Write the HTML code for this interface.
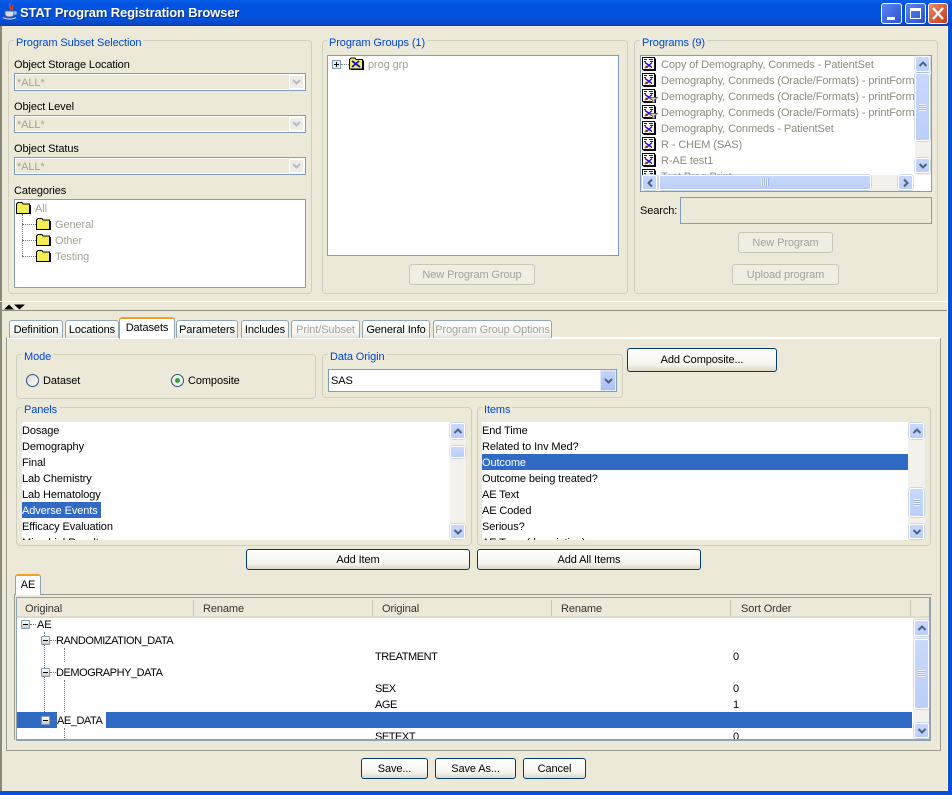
<!DOCTYPE html>
<html><head><meta charset="utf-8"><style>
*{box-sizing:border-box}
html,body{margin:0;padding:0}
body{width:952px;height:795px;position:relative;overflow:hidden;background:#ece9d8;font:11px/16px "Liberation Sans",sans-serif;letter-spacing:-.1px;color:#000}
.a,.t,.g,.gt,.f,.b,.sb,.tab,.l{position:absolute}
.t{white-space:nowrap;height:16px;padding-top:1px}
.c{letter-spacing:-.45px}
.d{color:#a5a298}
.g{border:1px solid #d0d0bf;border-radius:4px}
.gt{background:#ece9d8;color:#0046d5;padding:1px 2px 0;white-space:nowrap;height:16px}
.f{border:1px solid #7f9db9;background:#fff;overflow:hidden}
.cb{background:#ece9d8;border-color:#7f9db9;box-shadow:inset 0 0 0 1px #fff}
.b{border:1px solid #003c74;border-radius:3px;background:linear-gradient(#fff,#f5f4ee 70%,#dcd8c8);text-align:center;line-height:20px}
.b.x{border-color:#c9c7ba;background:#f0eee3;color:#a5a298}
.sb{background:linear-gradient(#c9d8fb,#bccff8);border:1px solid #fff;border-radius:2px;box-shadow:0 0 0 .5px #a9bde6}
.sb svg{position:absolute;left:50%;top:50%;transform:translate(-50%,-50%)}
.tab{border:1px solid #91a7b4;border-bottom:0;border-radius:3px 3px 0 0;background:linear-gradient(#fff,#f3f3ef 75%,#dfe0dc);text-align:center;line-height:19px;white-space:nowrap}
.tab.on{background:#fff;border-color:#91a7b4;border-top:2px solid #f2a127;z-index:3}
.tab.x{color:#a5a298}
.l{background:#9b9b90}
.dot{position:absolute;border-left:1px dotted #777}
.doth{position:absolute;border-top:1px dotted #777}
.box{position:absolute;width:9px;height:9px;border:1px solid #7f9db9;background:linear-gradient(#fff,#ccc9ba);border-radius:1px}
.box:after{content:"";position:absolute;left:1px;top:3px;width:5px;height:1px;background:#000}
</style></head><body>
<svg width="0" height="0" style="position:absolute">
<defs>
<symbol id="up" viewBox="0 0 9 6"><path d="M1 5L4.500 1.500L8 5" fill="none" stroke="#4d6185" stroke-width="2"/></symbol>
<symbol id="dn" viewBox="0 0 9 6"><path d="M1 1L4.500 4.500L8 1" fill="none" stroke="#4d6185" stroke-width="2"/></symbol>
<symbol id="lf" viewBox="0 0 6 9"><path d="M5 1L1.500 4.500L5 8" fill="none" stroke="#4d6185" stroke-width="2"/></symbol>
<symbol id="rt" viewBox="0 0 6 9"><path d="M1 1L4.500 4.500L1 8" fill="none" stroke="#4d6185" stroke-width="2"/></symbol>
<symbol id="prog" viewBox="0 0 14 14"><path d="M.5.500H12.500V12.500H.5z" fill="#fff" stroke="#000"/><path d="M13.500 1.500V13.500H1.500" fill="none" stroke="#000"/><path d="M2 2.500h3M7 2.500h4M2 4.500h2M8 4.500h3" stroke="#222"/><path d="M3 5.500l7 5M10 5.500l-6 5.500" stroke="#1414c8" stroke-width="1.400"/><path d="M3 11l2-2" stroke="#d81818" stroke-width="1.600"/><path d="M6.500 11.500h2" stroke="#e8c000" stroke-width="1.500"/></symbol>
<symbol id="filt" viewBox="0 0 9 6"><path d="M.5.500h8L5.500 3v2.500h-2V3z" fill="#ccc" stroke="#555" stroke-width=".7"/></symbol>
<symbol id="fold" viewBox="0 0 15 12"><path d="M.5 11.500V2L2 .5h4L7 2h6.500v9.500z" fill="#f4ee55" stroke="#000"/><path d="M14.500 3v9H2" fill="none" stroke="#000"/></symbol>
</defs></svg>

<!-- frame -->
<div class="a" style="left:0;top:0;width:952px;height:26px;background:linear-gradient(#0a5fe8,#0252e2 15%,#0453dd 70%,#0a48c8 90%,#0c3fae)"></div>
<div class="a" style="left:0;top:26px;width:2px;height:765px;background:#8a8878"></div>
<div class="a" style="left:948px;top:26px;width:4px;height:769px;background:#0a4fd8"></div>
<div class="a" style="left:947px;top:26px;width:1px;height:765px;background:#fff"></div>
<div class="a" style="left:0;top:791px;width:952px;height:4px;background:#0a4fd8"></div>
<svg class="a" style="left:2px;top:2px" width="16" height="18" viewBox="0 0 16 18"><path d="M8 1c-2 3 2 4 0 7M11 3c-1 2 0 3-1 5" fill="none" stroke="#d84020" stroke-width="1.500"/><path d="M3 9h9v3c0 2-2 3-4.500 3S3 14 3 12z" fill="#d8dcec" stroke="#506088"/><path d="M1 15.500c3 2 10 2 13 0M12 10h2v2h-2" fill="none" stroke="#dfe4f4" stroke-width="1"/></svg>
<div class="t" style="left:20px;top:4px;color:#fff;font:bold 13px/16px 'Liberation Sans',sans-serif;letter-spacing:-.15px;text-shadow:1px 1px 0 #0a2f8c">STAT Program Registration Browser</div>
<div class="a" style="left:881px;top:3px;width:21px;height:21px;border:1px solid #fff;border-radius:3px;background:linear-gradient(135deg,#5c86ee,#2a50d8)"><div class="a" style="left:5px;top:13px;width:8px;height:3px;background:#fff"></div></div>
<div class="a" style="left:905px;top:3px;width:21px;height:21px;border:1px solid #fff;border-radius:3px;background:linear-gradient(135deg,#5c86ee,#2a50d8)"><div class="a" style="left:4px;top:4px;width:11px;height:11px;border:1px solid #fff;border-top-width:3px"></div></div>
<div class="a" style="left:928px;top:3px;width:20px;height:21px;border:1px solid #fff;border-radius:3px;background:linear-gradient(135deg,#e8886a,#c83c14)"><svg class="a" style="left:3px;top:3px" width="12" height="13"><path d="M1 1L11 12M11 1L1 12" stroke="#fff" stroke-width="2.200"/></svg></div>

<!-- Program subset -->
<div class="g" style="left:8px;top:40px;width:304px;height:254px"></div>
<div class="gt" style="left:14px;top:34px">Program Subset Selection</div>
<div class="t" style="left:14px;top:56px">Object Storage Location</div>
<div class="f cb" style="left:14px;top:73px;width:292px;height:18px"></div><div class="t d" style="left:17px;top:74px">*ALL*</div>
<div class="a" style="left:289px;top:75px;width:15px;height:14px;background:#eeede5;border:1px solid #fff"><svg class="a" style="left:2px;top:3px" width="9" height="6"><use href="#dn" opacity=".35"/></svg></div>
<div class="t" style="left:14px;top:98px">Object Level</div>
<div class="f cb" style="left:14px;top:115px;width:292px;height:18px"></div><div class="t d" style="left:17px;top:116px">*ALL*</div>
<div class="a" style="left:289px;top:117px;width:15px;height:14px;background:#eeede5;border:1px solid #fff"><svg class="a" style="left:2px;top:3px" width="9" height="6"><use href="#dn" opacity=".35"/></svg></div>
<div class="t" style="left:14px;top:140px">Object Status</div>
<div class="f cb" style="left:14px;top:157px;width:292px;height:18px"></div><div class="t d" style="left:17px;top:158px">*ALL*</div>
<div class="a" style="left:289px;top:159px;width:15px;height:14px;background:#eeede5;border:1px solid #fff"><svg class="a" style="left:2px;top:3px" width="9" height="6"><use href="#dn" opacity=".35"/></svg></div>
<div class="t" style="left:14px;top:182px">Categories</div>
<div class="f" style="left:14px;top:199px;width:292px;height:89px"></div>
<svg class="a" style="left:16px;top:202px" width="15" height="12"><use href="#fold"/></svg>
<div class="t d" style="left:35px;top:200px">All</div>
<div class="dot" style="left:22px;top:214px;height:42px"></div>
<div class="doth" style="left:22px;top:224px;width:14px"></div><div class="doth" style="left:22px;top:240px;width:14px"></div><div class="doth" style="left:22px;top:256px;width:14px"></div>
<svg class="a" style="left:36px;top:218px" width="15" height="12"><use href="#fold"/></svg><div class="t d" style="left:55px;top:216px">General</div>
<svg class="a" style="left:36px;top:234px" width="15" height="12"><use href="#fold"/></svg><div class="t d" style="left:55px;top:232px">Other</div>
<svg class="a" style="left:36px;top:250px" width="15" height="12"><use href="#fold"/></svg><div class="t d" style="left:55px;top:248px">Testing</div>

<!-- Program groups -->
<div class="g" style="left:322px;top:40px;width:306px;height:254px"></div>
<div class="gt" style="left:327px;top:34px">Program Groups (1)</div>
<div class="f" style="left:327px;top:55px;width:292px;height:201px"></div>
<div class="a" style="left:332px;top:60px;width:9px;height:9px;border:1px solid #7f9db9;background:#eee"><div class="a" style="left:1px;top:3px;width:5px;height:1px;background:#000"></div><div class="a" style="left:3px;top:1px;width:1px;height:5px;background:#000"></div></div>
<div class="doth" style="left:341px;top:64px;width:8px"></div>
<svg class="a" style="left:349px;top:57px" width="15" height="13"><use href="#fold"/><path d="M3 4l8 6M10 4l-7 6" stroke="#1414c8" stroke-width="1.800"/></svg>
<div class="t d" style="left:368px;top:56px">prog grp</div>
<div class="b x" style="left:409px;top:264px;width:126px;height:21px">New Program Group</div>

<!-- Programs -->
<div class="g" style="left:634px;top:40px;width:304px;height:254px"></div>
<div class="gt" style="left:640px;top:34px">Programs (9)</div>
<div class="f" style="left:640px;top:55px;width:292px;height:137px"></div>
<div class="a" style="left:641px;top:56px;width:274px;height:119px;overflow:hidden">
<svg class="a" style="left:1px;top:1px" width="14" height="14"><use href="#prog"/></svg><div class="t" style="left:20px;top:0;color:#8c8a80">Copy of Demography, Conmeds - PatientSet</div>
<svg class="a" style="left:1px;top:17px" width="14" height="14"><use href="#prog"/></svg><div class="t" style="left:20px;top:16px;color:#8c8a80">Demography, Conmeds (Oracle/Formats) - printFormats</div>
<svg class="a" style="left:1px;top:33px" width="14" height="14"><use href="#prog"/></svg><svg class="a" style="left:8px;top:41px" width="9" height="6"><use href="#filt"/></svg><div class="t" style="left:20px;top:32px;color:#8c8a80">Demography, Conmeds (Oracle/Formats) - printFormats</div>
<svg class="a" style="left:1px;top:49px" width="14" height="14"><use href="#prog"/></svg><svg class="a" style="left:8px;top:57px" width="9" height="6"><use href="#filt"/></svg><div class="t" style="left:20px;top:48px;color:#8c8a80">Demography, Conmeds (Oracle/Formats) - printFormats</div>
<svg class="a" style="left:1px;top:65px" width="14" height="14"><use href="#prog"/></svg><div class="t" style="left:20px;top:64px;color:#8c8a80">Demography, Conmeds - PatientSet</div>
<svg class="a" style="left:1px;top:81px" width="14" height="14"><use href="#prog"/></svg><div class="t" style="left:20px;top:80px;color:#8c8a80">R - CHEM (SAS)</div>
<svg class="a" style="left:1px;top:97px" width="14" height="14"><use href="#prog"/></svg><div class="t" style="left:20px;top:96px;color:#8c8a80">R-AE test1</div>
<svg class="a" style="left:1px;top:113px" width="14" height="14"><use href="#prog"/></svg><div class="t" style="left:20px;top:112px;color:#8c8a80">Test Prog Print</div>
</div>
<div class="a" style="left:915px;top:56px;width:16px;height:119px;background:#f3f1ec"></div>
<div class="sb" style="left:915px;top:56px;width:15px;height:16px"><svg width="9" height="6"><use href="#up"/></svg></div>
<div class="sb" style="left:915px;top:73px;width:15px;height:68px"></div><div class="a" style="left:919px;top:104px;width:7px;height:7px;background:repeating-linear-gradient(#eef3ff 0 1px,#9fb7ec 1px 2px)"></div>
<div class="sb" style="left:915px;top:158px;width:15px;height:15px"><svg width="9" height="6"><use href="#dn"/></svg></div>
<div class="a" style="left:641px;top:175px;width:272px;height:16px;background:#f3f1ec"></div>
<div class="sb" style="left:642px;top:175px;width:15px;height:15px"><svg width="6" height="9"><use href="#lf"/></svg></div>
<div class="sb" style="left:659px;top:175px;width:212px;height:15px"></div><div class="a" style="left:761px;top:178px;width:8px;height:8px;background:repeating-linear-gradient(90deg,#eef3ff 0 1px,#9fb7ec 1px 2px)"></div>
<div class="sb" style="left:898px;top:175px;width:15px;height:15px"><svg width="6" height="9"><use href="#rt"/></svg></div>
<div class="t" style="left:640px;top:202px">Search:</div>
<div class="f" style="left:680px;top:197px;width:252px;height:27px;background:#ece9d8"></div>
<div class="b x" style="left:738px;top:232px;width:95px;height:21px">New Program</div>
<div class="b x" style="left:732px;top:264px;width:107px;height:21px">Upload program</div>

<!-- splitter -->
<div class="a" style="left:0;top:301px;width:947px;height:1px;background:#fff"></div>
<svg class="a" style="left:3px;top:303px" width="24" height="7"><path d="M1 6.500L6 1.500L11 6.500zM11 1.500H22L16.500 6.500z" fill="#000"/></svg>
<div class="a" style="left:2px;top:310px;width:945px;height:1px;background:#8e8d7c"></div>

<!-- tabs -->
<div class="a" style="left:6px;top:337px;width:935px;height:414px;border:1px solid #9b9b90;border-top:2px solid #fff;border-left-color:#fff"></div>
<div class="a" style="left:6px;top:337px;width:1px;height:414px;background:#9b9b90"></div>
<div class="tab" style="left:9px;top:320px;width:54px;height:18px">Definition</div>
<div class="tab" style="left:65px;top:320px;width:54px;height:18px">Locations</div>
<div class="tab on" style="left:119px;top:317px;width:56px;height:22px">Datasets</div>
<div class="tab" style="left:176px;top:320px;width:62px;height:18px">Parameters</div>
<div class="tab" style="left:241px;top:320px;width:48px;height:18px">Includes</div>
<div class="tab x" style="left:291px;top:320px;width:69px;height:18px">Print/Subset</div>
<div class="tab" style="left:362px;top:320px;width:68px;height:18px">General Info</div>
<div class="tab x" style="left:433px;top:320px;width:119px;height:18px">Program Group Options</div>

<!-- Mode -->
<div class="g" style="left:16px;top:354px;width:300px;height:45px"></div>
<div class="gt" style="left:22px;top:348px">Mode</div>
<div class="a" style="left:26px;top:374px;width:13px;height:13px;border:1px solid #2a5480;border-radius:50%;background:linear-gradient(135deg,#dcd9cc,#fff)"></div>
<div class="t" style="left:43px;top:372px">Dataset</div>
<div class="a" style="left:171px;top:374px;width:13px;height:13px;border:1px solid #2a5480;border-radius:50%;background:#f3f2ea"><div class="a" style="left:3px;top:3px;width:5px;height:5px;border-radius:50%;background:#36a536"></div></div>
<div class="t" style="left:188px;top:372px">Composite</div>

<!-- Data origin -->
<div class="g" style="left:322px;top:354px;width:301px;height:44px"></div>
<div class="gt" style="left:328px;top:348px">Data Origin</div>
<div class="f" style="left:328px;top:369px;width:289px;height:23px"></div>
<div class="t" style="left:331px;top:372px">SAS</div>
<div class="a" style="left:600px;top:370px;width:16px;height:21px;background:linear-gradient(#c6d6fb,#a9c0f2);border:1px solid #e4ecfb"><svg class="a" style="left:3px;top:7px" width="9" height="6"><use href="#dn"/></svg></div>
<div class="b" style="left:627px;top:348px;width:150px;height:24px;line-height:23px">Add Composite...</div>

<!-- Panels -->
<div class="g" style="left:16px;top:407px;width:456px;height:139px"></div>
<div class="gt" style="left:22px;top:401px">Panels</div>
<div class="a" style="left:22px;top:422px;width:428px;height:118px;background:#fff;overflow:hidden">
<div class="t" style="top:0">Dosage</div><div class="t" style="top:16px">Demography</div><div class="t" style="top:32px">Final</div><div class="t" style="top:48px">Lab Chemistry</div><div class="t" style="top:64px">Lab Hematology</div>
<div class="t" style="top:80px;width:79px;background:#316ac5;color:#fff">Adverse Events</div>
<div class="t" style="top:96px">Efficacy Evaluation</div><div class="t" style="top:112px">Microbiol Results</div>
</div>
<div class="a" style="left:450px;top:422px;width:16px;height:118px;background:#f3f1ec"></div>
<div class="sb" style="left:450px;top:423px;width:15px;height:16px"><svg width="9" height="6"><use href="#up"/></svg></div>
<div class="sb" style="left:450px;top:446px;width:15px;height:12px"></div>
<div class="sb" style="left:450px;top:524px;width:15px;height:15px"><svg width="9" height="6"><use href="#dn"/></svg></div>

<!-- Items -->
<div class="g" style="left:477px;top:407px;width:454px;height:139px"></div>
<div class="gt" style="left:482px;top:401px">Items</div>
<div class="a" style="left:482px;top:422px;width:426px;height:118px;background:#fff;overflow:hidden">
<div class="t" style="top:0">End Time</div><div class="t" style="top:16px">Related to Inv Med?</div>
<div class="t" style="top:32px;width:426px;background:#316ac5;color:#fff">Outcome</div>
<div class="t" style="top:48px">Outcome being treated?</div><div class="t" style="top:64px">AE Text</div><div class="t" style="top:80px">AE Coded</div><div class="t" style="top:96px">Serious?</div><div class="t" style="top:112px">AE Term (description)</div>
</div>
<div class="a" style="left:908px;top:422px;width:17px;height:118px;background:#f3f1ec"></div>
<div class="sb" style="left:909px;top:423px;width:15px;height:16px"><svg width="9" height="6"><use href="#up"/></svg></div>
<div class="sb" style="left:909px;top:488px;width:15px;height:29px"></div><div class="a" style="left:913px;top:499px;width:7px;height:7px;background:repeating-linear-gradient(#eef3ff 0 1px,#9fb7ec 1px 2px)"></div>
<div class="sb" style="left:909px;top:524px;width:15px;height:15px"><svg width="9" height="6"><use href="#dn"/></svg></div>

<div class="b" style="left:246px;top:549px;width:224px;height:21px">Add Item</div>
<div class="b" style="left:477px;top:549px;width:224px;height:21px">Add All Items</div>

<!-- AE subpanel -->
<div class="a" style="left:40px;top:594px;width:892px;height:1px;background:#9b9b90"></div>
<div class="a" style="left:14px;top:594px;width:1px;height:146px;background:#9b9b90"></div>
<div class="tab on" style="left:15px;top:574px;width:26px;height:21px">AE</div>
<div class="a" style="left:16px;top:597px;width:915px;height:144px;background:#fff;border:1px solid #8fa4b2;border-bottom:2px solid #8fa4b2;border-right:2px solid #8fa4b2"></div>
<div class="a" style="left:17px;top:598px;width:912px;height:20px;background:#ece9d8;border-bottom:2px solid #dedbc9"></div>
<div class="a" style="left:193px;top:600px;width:1px;height:16px;background:#cbc8b8"></div>
<div class="a" style="left:372px;top:600px;width:1px;height:16px;background:#cbc8b8"></div>
<div class="a" style="left:551px;top:600px;width:1px;height:16px;background:#cbc8b8"></div>
<div class="a" style="left:730px;top:600px;width:1px;height:16px;background:#cbc8b8"></div>
<div class="a" style="left:910px;top:600px;width:1px;height:16px;background:#cbc8b8"></div>
<div class="t" style="left:25px;top:600px;color:#333">Original</div>
<div class="t" style="left:203px;top:600px;color:#333">Rename</div>
<div class="t" style="left:382px;top:600px;color:#333">Original</div>
<div class="t" style="left:561px;top:600px;color:#333">Rename</div>
<div class="t" style="left:741px;top:600px;color:#333">Sort Order</div>

<div class="a" style="left:17px;top:712px;width:895px;height:16px;background:#316ac5"></div>
<div class="a" style="left:57px;top:712px;width:49px;height:16px;background:#fff"></div>
<div class="dot" style="left:44px;top:632px;height:80px"></div>
<div class="dot" style="left:64px;top:648px;height:14px"></div>
<div class="dot" style="left:64px;top:680px;height:32px"></div>
<div class="dot" style="left:64px;top:728px;height:12px"></div>
<div class="box" style="left:21px;top:620px"></div><div class="doth" style="left:30px;top:624px;width:6px"></div>
<div class="box" style="left:41px;top:636px"></div><div class="doth" style="left:50px;top:640px;width:6px"></div>
<div class="box" style="left:41px;top:668px"></div><div class="doth" style="left:50px;top:672px;width:6px"></div>
<div class="box" style="left:41px;top:716px"></div><div class="doth" style="left:50px;top:720px;width:6px"></div>
<div class="t" style="left:37px;top:616px">AE</div>
<div class="t c" style="left:56px;top:632px">RANDOMIZATION_DATA</div>
<div class="t c" style="left:56px;top:664px">DEMOGRAPHY_DATA</div>
<div class="t c" style="left:57px;top:712px">AE_DATA</div>
<div class="t c" style="left:375px;top:648px">TREATMENT</div><div class="t" style="left:733px;top:648px">0</div>
<div class="t c" style="left:375px;top:680px">SEX</div><div class="t" style="left:733px;top:680px">0</div>
<div class="t c" style="left:375px;top:696px">AGE</div><div class="t" style="left:733px;top:696px">1</div>
<div class="a" style="left:17px;top:729px;width:895px;height:10px;overflow:hidden"><div class="t c" style="left:358px;top:-1px">SETEXT</div><div class="t" style="left:716px;top:-1px">0</div></div>
<div class="a" style="left:913px;top:618px;width:16px;height:121px;background:#f3f1ec"></div>
<div class="sb" style="left:914px;top:620px;width:15px;height:16px"><svg width="9" height="6"><use href="#up"/></svg></div>
<div class="sb" style="left:914px;top:639px;width:15px;height:70px"></div><div class="a" style="left:918px;top:670px;width:7px;height:7px;background:repeating-linear-gradient(#eef3ff 0 1px,#9fb7ec 1px 2px)"></div>
<div class="sb" style="left:914px;top:723px;width:15px;height:15px"><svg width="9" height="6"><use href="#dn"/></svg></div>

<!-- bottom buttons -->
<div class="b" style="left:361px;top:758px;width:67px;height:21px">Save...</div>
<div class="b" style="left:435px;top:758px;width:81px;height:21px">Save As...</div>
<div class="b" style="left:523px;top:758px;width:63px;height:21px">Cancel</div>
</body></html>
